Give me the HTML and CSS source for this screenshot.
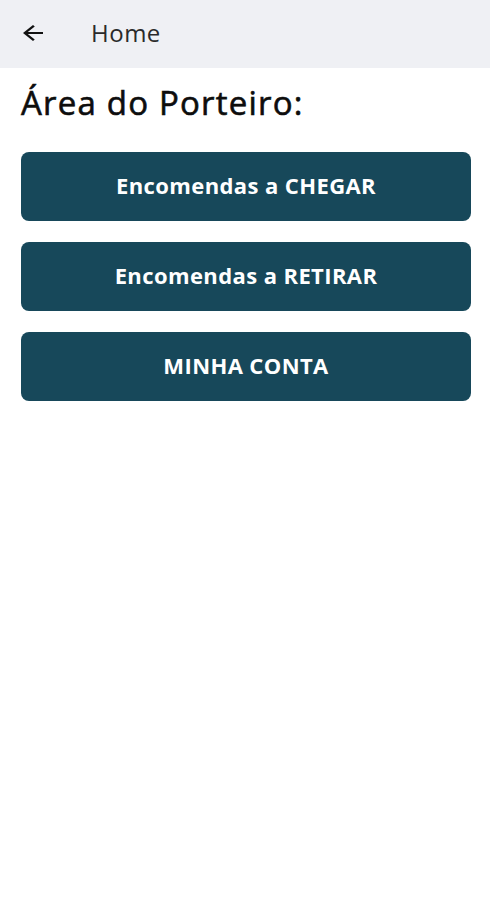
FILE: index.html
```html
<!DOCTYPE html>
<html lang="pt">
    <head>
        <title>Home</title>
        <link rel="stylesheet" href="styles.css">
    </head>
    <body>
        <header class="topbar">
            <svg class="back-icon" viewBox="0 0 24 24" width="30" height="24" preserveAspectRatio="none">
                <path d="M20 11H7.83l5.59-5.59L12 4l-8 8 8 8 1.41-1.41L7.83 13H20v-2z"/>
            </svg>
            <span class="topbar-title">Home</span>
        </header>

        <main class="content">
            <h1 class="title">Área do Porteiro:</h1>
            <div class="actions">
                <button class="action-btn">Encomendas a CHEGAR</button>
                <button class="action-btn">Encomendas a RETIRAR</button>
                <button class="action-btn">MINHA CONTA</button>
            </div>
        </main>
    </body>
</html>
```

FILE: styles.css
```css
body {
    margin: 0;
    font-family: "Open Sans", "Noto Sans", sans-serif;
    background: #ffffff;
}

/* Top bar */
.topbar {
    height: 68px;
    display: flex;
    align-items: center;
    padding: 0 0 0 18px;
    background: #eff0f4;
}

.back-icon {
    fill: #111111;
    margin-top: -3px;
}

.topbar-title {
    margin-left: 43px;
    margin-top: -4px;
    font-size: 24px;
    letter-spacing: 0.5px;
    color: #2a2a2a;
}

/* Content */
.content {
    padding: 15px 19px 0 21px;
}

.title {
    margin: 0 0 29px 0;
    font-size: 33px;
    line-height: 40px;
    font-weight: 500;
    letter-spacing: 1.2px;
    color: #0d0d0d;
    -webkit-text-stroke: 0.6px #0d0d0d;
}

.actions {
    display: flex;
    flex-direction: column;
    gap: 21px;
}

.action-btn {
    height: 69px;
    padding-bottom: 4px;
    border: none;
    border-radius: 8px;
    background: #17485a;
    color: #ffffff;
    font-family: "Open Sans", "Noto Sans", sans-serif;
    font-size: 22px;
    font-weight: 700;
    letter-spacing: 0.4px;
}
```
